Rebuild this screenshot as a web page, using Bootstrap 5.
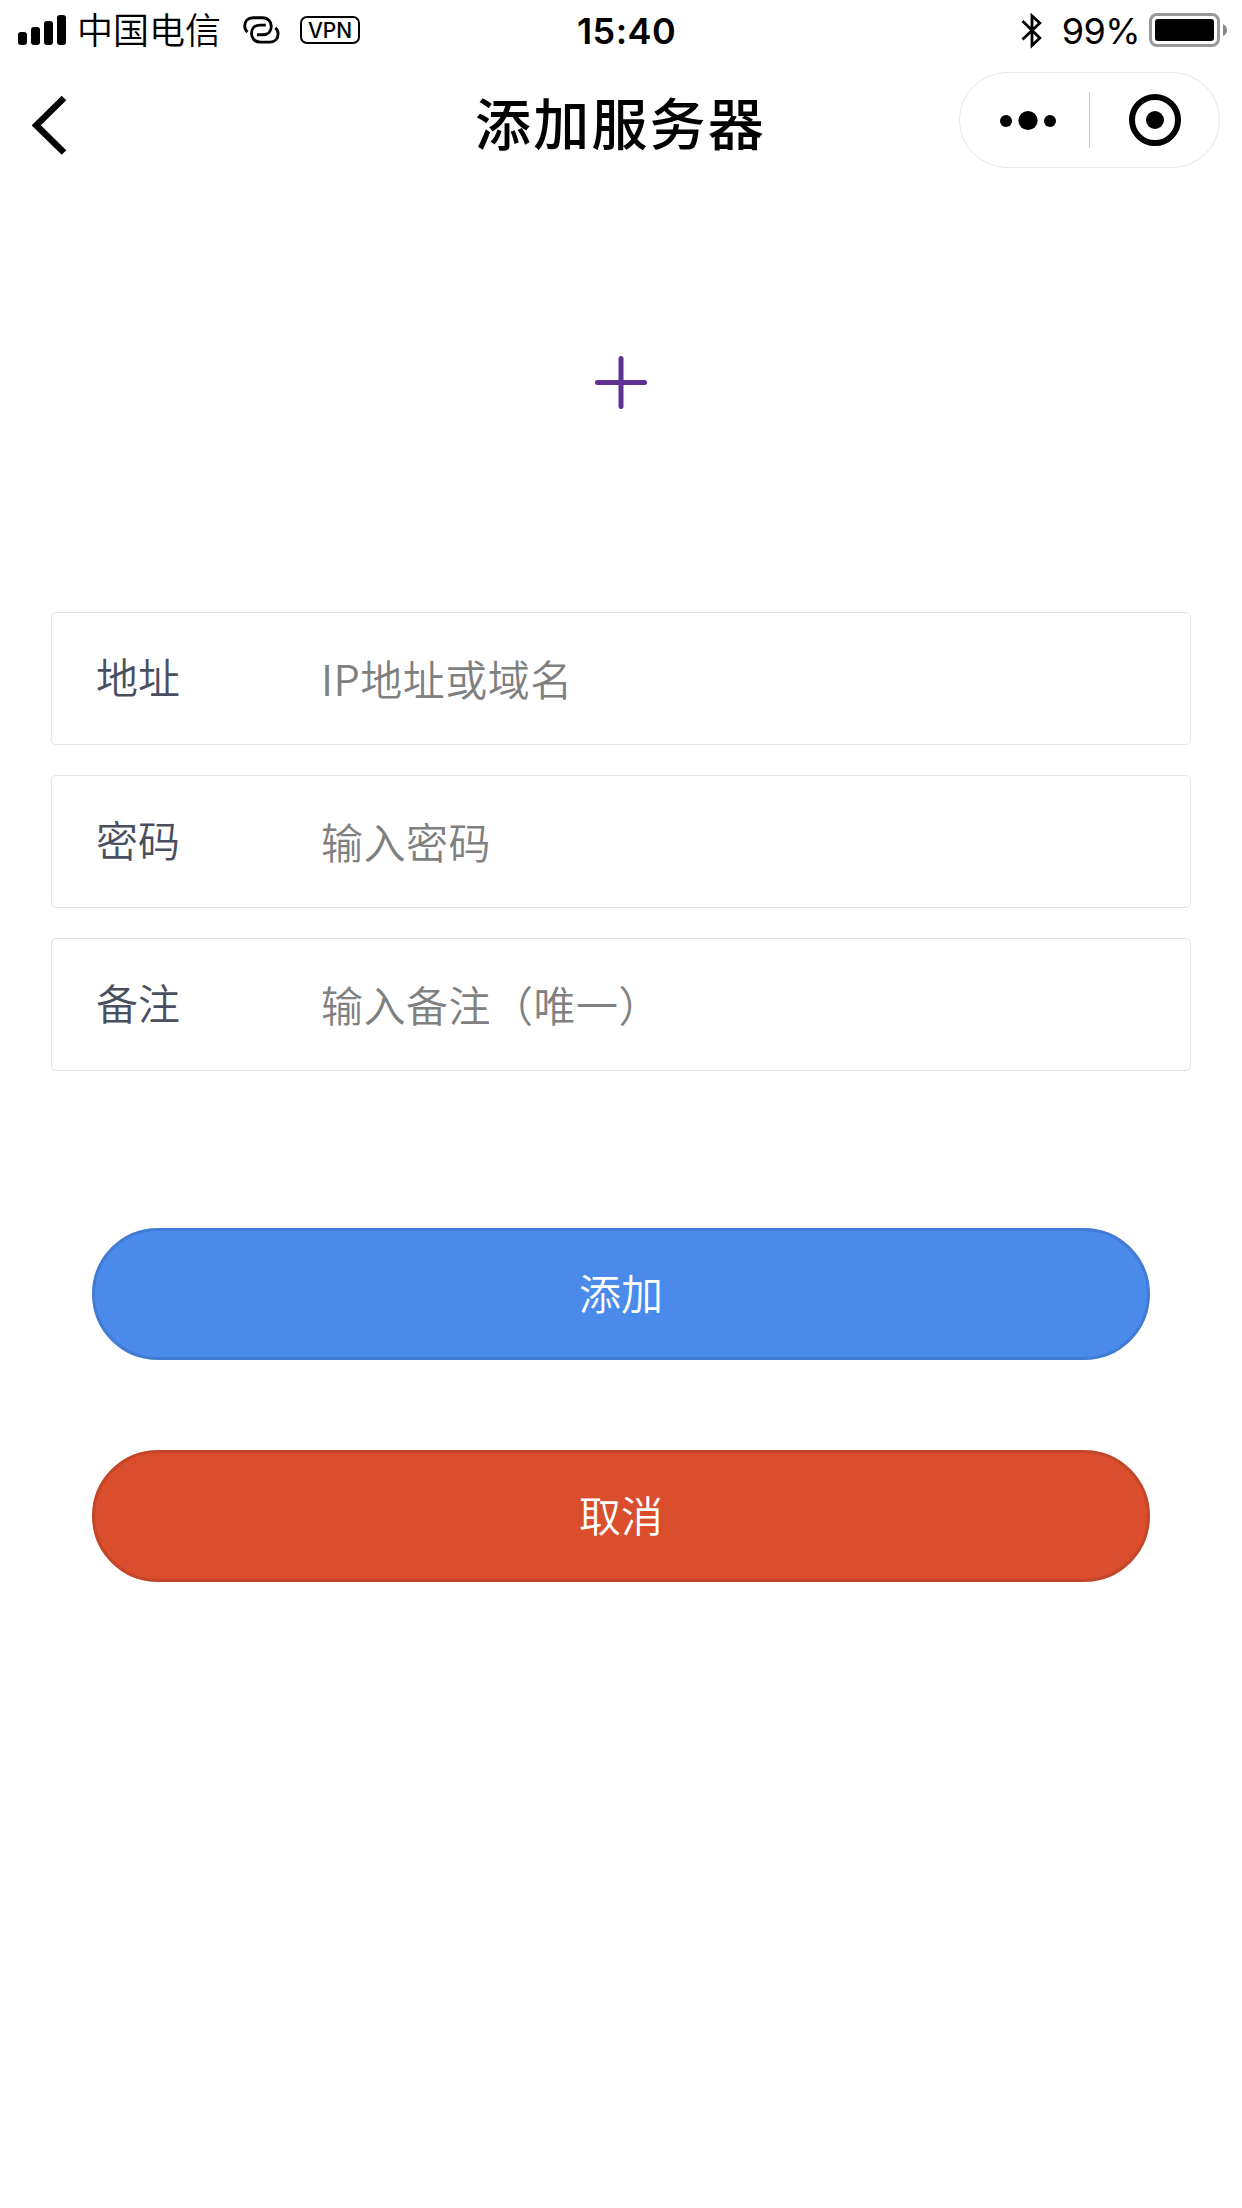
<!DOCTYPE html>
<html lang="zh-CN">
<head>
<meta charset="utf-8">
<meta name="viewport" content="width=device-width, initial-scale=1">
<title>添加服务器</title>
<link href="https://cdn.jsdelivr.net/npm/bootstrap@5.3.0/dist/css/bootstrap.min.css" rel="stylesheet">
<style>
body{font-family:Inter,"Noto Sans CJK SC",sans-serif;color:#000;background:#fff;min-height:2208px;overflow-x:hidden}
svg{display:block;flex:none}
.statusbar{height:60px;font-size:36px;line-height:60px}
.status-left{width:577px;padding-left:18px}
.carrier{margin-left:9px;padding-top:2px;width:155px;white-space:nowrap;font-weight:350}
.vpn-tag{width:60px;height:28px;margin-left:20px;border:2px solid #000;border-radius:7px;font-size:21px;line-height:25px;font-weight:500;text-align:center}
.clock{font-weight:600;letter-spacing:.4px;padding-top:2px}
.status-right{padding-right:14px}
.battery-text{letter-spacing:-.6px;padding-top:2px;margin:0 8px 0 18px}
.titlebar{height:132px;padding:12px 22px 0 32px}
.page-title{font-size:56px;font-weight:500;letter-spacing:2.2px;line-height:96px;width:290px;white-space:nowrap;margin:5px 194px 0 0}
.capsule{width:261px;height:96px;border:1px solid #e6e6e6;border-radius:48px}
.hero-add{padding-top:160px;height:420px}
.fields{padding:0 51px;gap:30px}
.field{height:133px;border:1px solid #e4e4e4;border-radius:5px;padding-left:44px}
.field label{width:225px;flex:none;font-size:42px;line-height:60px;color:#4a4f60;font-weight:350}
.field .form-control{font-size:42px;line-height:60px;letter-spacing:.5px;height:66px;padding:0 0 3px;color:#333;font-family:"Noto Sans CJK SC",sans-serif;font-weight:350}
.field .form-control::placeholder{color:#808080;opacity:1}
.actions{padding:157px 92px 0;gap:90px}
.actions .btn{height:132px;font-size:42px;border-width:3px;color:#fff;padding:1px 0 0;font-weight:350}
.btn-add{--bs-btn-bg:#4a8aea;--bs-btn-border-color:#417bd2}
.btn-cancel{--bs-btn-bg:#da4e2d;--bs-btn-border-color:#c34628}
</style>
</head>
<body>
<header>
  <div class="statusbar d-flex align-items-center">
    <div class="status-left d-flex align-items-center">
      <svg width="50" height="60" viewBox="18 0 50 60"><rect x="18" y="32" width="9" height="13" rx="3"/><rect x="31" y="27" width="9" height="18" rx="3"/><rect x="44" y="21" width="9" height="24" rx="3"/><rect x="57" y="15" width="9" height="30" rx="3"/></svg>
      <span class="carrier">中国电信</span>
      <svg class="ms-2" width="40" height="60" viewBox="240 0 40 60" fill="none" stroke="#000" stroke-width="2.9"><path d="M247.500 32C245.500 30.500 244.700 28.500 244.700 26C244.700 21 248 17.700 253 17.700H262.500C268 17.700 271.300 21.500 271.300 26.200C271.300 31.500 268 34.700 263 34.700H257"/><path d="M275.300 27.800C277.300 29.300 278.100 31.300 278.100 33.800C278.100 38.800 274.800 42.100 269.800 42.100H260.300C254.800 42.100 251.500 38.300 251.500 33.600C251.500 28.300 254.800 25.100 259.800 25.100H265.800"/></svg>
      <span class="vpn-tag">VPN</span>
    </div>
    <span class="clock">15:40</span>
    <div class="status-right d-flex align-items-center ms-auto">
      <svg width="24" height="60" viewBox="1022 0 24 60" fill="none" stroke="#000" stroke-width="2.8"><path d="M1024.500 21L1041.800 38L1034 45.500V16L1041.800 23L1024.500 39.500"/></svg>
      <span class="battery-text">99%</span>
      <svg width="80" height="60" viewBox="1148 0 80 60"><rect x="1150.500" y="14.500" width="68" height="31" rx="6.500" fill="none" stroke="#999" stroke-width="3"/><rect x="1155" y="19" width="59" height="22" rx="3"/><path d="M1223 24Q1227 26 1227 30T1223 36Z" fill="#888"/></svg>
    </div>
  </div>
  <nav class="titlebar d-flex align-items-start">
    <svg width="40" height="106" viewBox="32 72 40 106" fill="none" stroke="#000" stroke-width="6.500"><path d="M64 98L36.300 125.300L64 152.500"/></svg>
    <h1 class="page-title ms-auto">添加服务器</h1>
    <div class="capsule">
      <svg width="259" height="94" viewBox="960 73 259 94"><circle cx="1006" cy="121" r="6"/><circle cx="1028" cy="120.500" r="9.600"/><circle cx="1050" cy="121" r="6"/><path d="M1089.500 92V148" stroke="#ccc"/><circle cx="1155" cy="120" r="23" fill="none" stroke="#000" stroke-width="6"/><circle cx="1155" cy="120" r="9"/></svg>
    </div>
  </nav>
</header>
<main>
  <div class="hero-add d-flex justify-content-center">
    <svg width="60" height="60" viewBox="591 352 60 60" stroke="#5f3292" stroke-width="5" stroke-linecap="round"><path d="M597.500 382.500H644.500M621 358.500V406.500"/></svg>
  </div>
  <form>
    <div class="fields d-flex flex-column">
      <div class="field d-flex align-items-center"><label for="host">地址</label><input class="form-control border-0 bg-transparent" id="host" placeholder="IP地址或域名"></div>
      <div class="field d-flex align-items-center"><label for="pass">密码</label><input class="form-control border-0 bg-transparent" id="pass" type="password" placeholder="输入密码"></div>
      <div class="field d-flex align-items-center"><label for="note">备注</label><input class="form-control border-0 bg-transparent" id="note" placeholder="输入备注（唯一）"></div>
    </div>
    <div class="actions d-flex flex-column">
      <button type="button" class="btn btn-add rounded-pill">添加</button>
      <button type="button" class="btn btn-cancel rounded-pill">取消</button>
    </div>
  </form>
</main>
<script src="https://cdn.jsdelivr.net/npm/bootstrap@5.3.0/dist/js/bootstrap.bundle.min.js"></script>
</body>
</html>
